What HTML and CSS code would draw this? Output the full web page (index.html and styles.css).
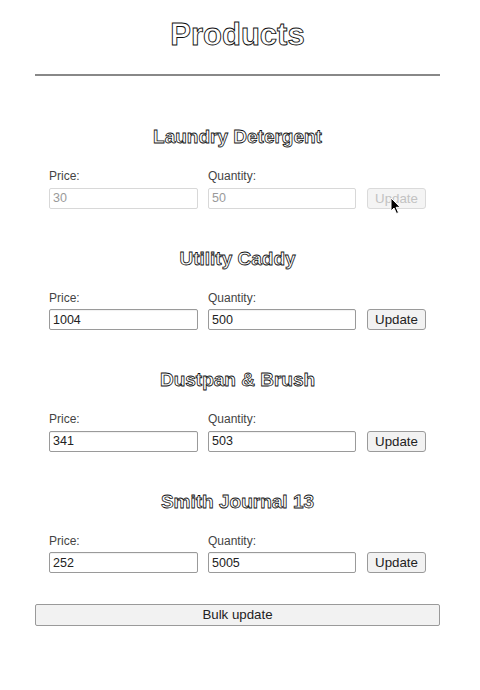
FILE: index.html
```html
<!DOCTYPE html>
<html>
<head>
<meta charset="utf-8">
<link rel="stylesheet" href="styles.css">
</head>
<body>
<div class="page">
  <h1 class="title">Products</h1>
  <hr class="rule">
  <div class="section first">
    <h2 class="name">Laundry Detergent</h2>
    <div class="row">
      <label class="field"><span class="lbl">Price:</span><input class="inp" value="30" disabled></label>
      <label class="field"><span class="lbl">Quantity:</span><input class="inp" value="50" disabled></label>
      <div class="btnwrap">
        <button class="btn" disabled>Update</button>
        <svg class="cursor" width="12" height="18" viewBox="0 0 12 18"><path d="M1 1 L1 14 L4 11 L6.5 16.5 L8.5 15.6 L6.1 10.3 L10.2 10.3 Z" fill="#000" stroke="#fff" stroke-width="1" stroke-linejoin="round"/></svg>
      </div>
    </div>
  </div>
  <div class="section">
    <h2 class="name">Utility Caddy</h2>
    <div class="row">
      <label class="field"><span class="lbl">Price:</span><input class="inp" value="1004"></label>
      <label class="field"><span class="lbl">Quantity:</span><input class="inp" value="500"></label>
      <div class="btnwrap"><button class="btn">Update</button></div>
    </div>
  </div>
  <div class="section">
    <h2 class="name">Dustpan &amp; Brush</h2>
    <div class="row">
      <label class="field"><span class="lbl">Price:</span><input class="inp" value="341"></label>
      <label class="field"><span class="lbl">Quantity:</span><input class="inp" value="503"></label>
      <div class="btnwrap"><button class="btn">Update</button></div>
    </div>
  </div>
  <div class="section">
    <h2 class="name">Smith Journal 13</h2>
    <div class="row">
      <label class="field"><span class="lbl">Price:</span><input class="inp" value="252"></label>
      <label class="field"><span class="lbl">Quantity:</span><input class="inp" value="5005"></label>
      <div class="btnwrap"><button class="btn">Update</button></div>
    </div>
  </div>
  <button class="bulk">Bulk update</button>
</div>
</body>
</html>
```
FILE: styles.css
```css
html, body {
  margin: 0;
  padding: 0;
  background: #fff;
}
body {
  font-family: "Liberation Sans", Arial, sans-serif;
  color: #222;
}
.page {
  width: 405px;
  margin-left: 35px;
  padding-top: 17px;
  padding-bottom: 40px;
}
.title {
  margin: 0;
  font-size: 31px;
  line-height: 36px;
  font-weight: bold;
  text-align: center;
  color: #fff;
  -webkit-text-stroke: 0.9px #111;
}
.rule {
  margin: 21px 0 0 0;
  height: 0;
  border: none;
  border-top: 2px solid #888;
}
.section {
  padding-top: 37.9px;
}
.section.first {
  padding-top: 49.4px;
}
.name {
  margin: 0;
  font-size: 19px;
  line-height: 24px;
  font-weight: bold;
  text-align: center;
  color: #fff;
  -webkit-text-stroke: 0.8px #111;
}
.row {
  margin-top: 20px;
  padding: 0 14px;
  display: grid;
  grid-template-columns: 149px 148px 59px;
  column-gap: 10px;
  align-items: end;
}
.row > :nth-child(3) {
  margin-left: 1px;
}
.field {
  display: flex;
  flex-direction: column;
  gap: 4.6px;
}
.lbl {
  font-size: 12px;
  line-height: 14px;
  color: #444;
}
.inp {
  box-sizing: border-box;
  width: 100%;
  height: 21px;
  margin: 0;
  padding: 0 3px;
  border: 1px solid #9a9a9a;
  border-radius: 2px;
  background: #fff;
  font-family: "Liberation Sans", Arial, sans-serif;
  font-size: 12.5px;
  color: #222;
  box-shadow: inset 0 1px 1px rgba(0,0,0,0.06);
}
.inp:disabled {
  border-color: #d8d8d8;
  color: #9a9a9a;
  background: #fff;
  box-shadow: none;
}
.btnwrap {
  position: relative;
  height: 21px;
}
.btn {
  box-sizing: border-box;
  width: 59px;
  height: 21px;
  margin: 0;
  padding: 0;
  border: 1px solid #9a9a9a;
  border-radius: 3px;
  background: #f2f2f2;
  font-family: "Liberation Sans", Arial, sans-serif;
  font-size: 13.3px;
  color: #222;
}
.btn:disabled {
  border-color: #dadada;
  background: #f4f4f4;
  color: #c2c2c2;
}
.cursor {
  position: absolute;
  left: 23px;
  top: 9.5px;
}
.bulk {
  display: block;
  box-sizing: border-box;
  width: 405px;
  height: 21.5px;
  margin-top: 30.8px;
  padding: 0;
  border: 1px solid #9a9a9a;
  border-radius: 2px;
  background: #f2f2f2;
  font-family: "Liberation Sans", Arial, sans-serif;
  font-size: 13.3px;
  color: #222;
}
```
